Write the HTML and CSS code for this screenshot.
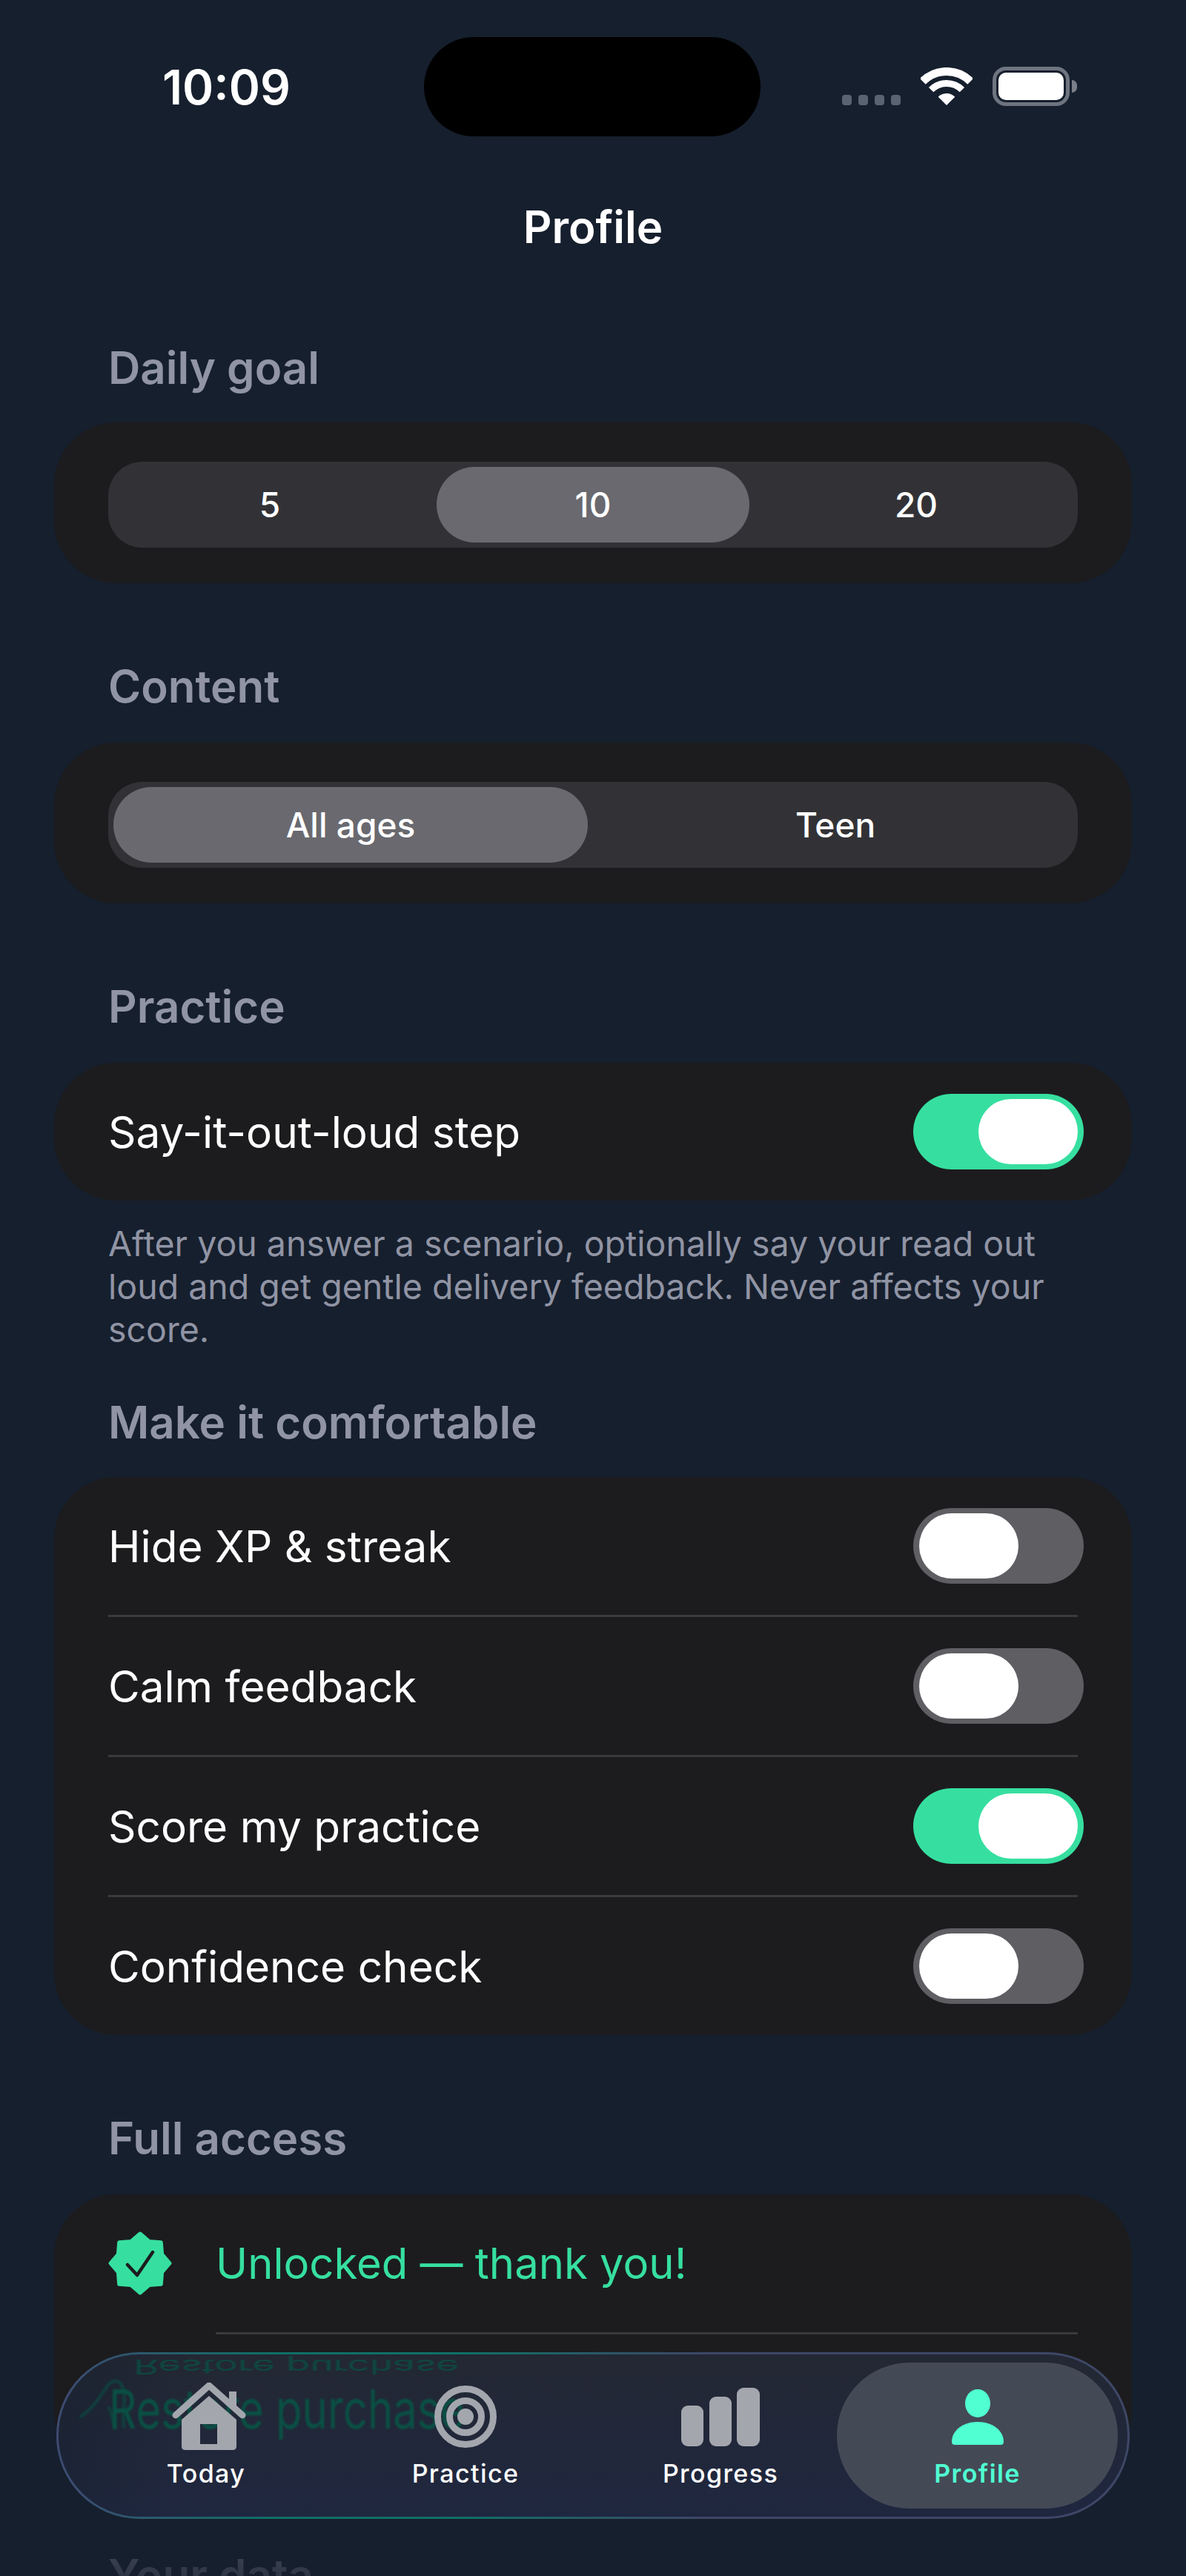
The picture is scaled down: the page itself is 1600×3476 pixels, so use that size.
FILE: index.html
```html
<!DOCTYPE html>
<html lang="en">
<head>
<meta charset="utf-8">
<title>Profile</title>
<link rel="stylesheet" href="styles.css">
</head>
<body>
<div class="status">
  <div class="time">10:09</div>
  <div class="island"></div>
  <div class="sys">
    <div class="dots"><i></i><i></i><i></i><i></i></div>
    <svg class="wifi" viewBox="0 0 70 52"><path d="M2.8 18.8A45.5 45.5 0 0 1 67.2 18.8" fill="none" stroke="#fff" stroke-width="11"/><path d="M14.1 30.1A29.5 29.5 0 0 1 55.9 30.1" fill="none" stroke="#fff" stroke-width="9"/><path d="M35 51L23.7 39.7A16 16 0 0 1 46.3 39.7Z" fill="#fff"/></svg>
    <div class="battery"><div class="cell"></div></div>
    <div class="nib"></div>
  </div>
</div>
<h1 class="title">Profile</h1>
<main class="main">
  <h2 class="head">Daily goal</h2>
  <section class="card seg-card">
    <div class="seg seg3"><span>5</span><span class="on">10</span><span>20</span></div>
  </section>
  <h2 class="head">Content</h2>
  <section class="card seg-card">
    <div class="seg seg2"><span class="on">All ages</span><span>Teen</span></div>
  </section>
  <h2 class="head">Practice</h2>
  <section class="card">
    <div class="row"><span>Say-it-out-loud step</span><div class="toggle active"><b></b></div></div>
  </section>
  <p class="note">After you answer a scenario, optionally say your read out loud and get gentle delivery feedback. Never affects your score.</p>
  <h2 class="head tight">Make it comfortable</h2>
  <section class="card">
    <div class="row"><span>Hide XP &amp; streak</span><div class="toggle"><b></b></div></div>
    <div class="rule"></div>
    <div class="row"><span>Calm feedback</span><div class="toggle"><b></b></div></div>
    <div class="rule"></div>
    <div class="row"><span>Score my practice</span><div class="toggle active"><b></b></div></div>
    <div class="rule"></div>
    <div class="row"><span>Confidence check</span><div class="toggle"><b></b></div></div>
  </section>
  <h2 class="head">Full access</h2>
  <section class="card">
    <div class="row access">
      <svg class="badge" viewBox="0 0 88 88"><polygon points="84,44 73.6,56.2 72.3,72.3 56.2,73.6 44,84 31.8,73.6 15.7,72.3 14.4,56.2 4,44 14.4,31.8 15.7,15.7 31.8,14.4 44,4 56.2,14.4 72.3,15.7 73.6,31.8" fill="#36DFA0" stroke="#36DFA0" stroke-width="5" stroke-linejoin="round"/><path d="M27 46L40 60L61 29" fill="none" stroke="#1C1C1E" stroke-width="4.5" stroke-linecap="round" stroke-linejoin="round"/></svg>
      <span class="green">Unlocked — thank you!</span>
    </div>
    <div class="rule short"></div>
    <div class="row access"><span class="green restore">Restore purchase</span></div>
  </section>
  <h2 class="head">Your data</h2>
</main>
<div class="fade"></div>
<nav class="nav">
  <div class="refract" aria-hidden="true">
    <svg class="swirl" viewBox="0 0 90 80"><path d="M4 62C22 50 30 34 42 18C52 10 60 14 62 30C64 46 60 58 62 76M42 50C48 60 46 68 50 78" fill="none" stroke="#0A5044" stroke-width="4" stroke-linecap="round"/></svg>
    <span class="mirror">Restore purchase</span>
    <span class="ghost">Restore purchase</span>
  </div>
  <a class="tab">
    <svg class="ico" viewBox="0 0 110 92"><path d="M86 12H96V32H86Z" fill="#A4A6AE"/><path fill-rule="evenodd" d="M59 18L96 50V86Q96 91 91 91H27Q22 91 22 86V50ZM47 56V83H70V56Z" fill="#A4A6AE"/><path d="M14 44L59 4L104 44" fill="none" stroke="#A4A6AE" stroke-width="9" stroke-linecap="round" stroke-linejoin="round"/></svg>
    <span>Today</span>
  </a>
  <a class="tab">
    <svg class="ico" viewBox="0 0 110 92"><circle cx="55" cy="46" r="37.5" fill="none" stroke="#A4A6AE" stroke-width="9"/><circle cx="55" cy="46" r="21.5" fill="none" stroke="#A4A6AE" stroke-width="9"/><circle cx="55" cy="46" r="11" fill="#A4A6AE"/></svg>
    <span>Practice</span>
  </a>
  <a class="tab third">
    <svg class="ico" viewBox="0 0 110 92"><rect x="2" y="31" width="30" height="55" rx="9" fill="#A4A6AE"/><rect x="40" y="19" width="30" height="67" rx="9" fill="#A4A6AE"/><rect x="77" y="7" width="31" height="79" rx="9" fill="#A4A6AE"/></svg>
    <span>Progress</span>
  </a>
  <a class="tab current">
    <svg class="ico" viewBox="0 0 110 92"><ellipse cx="55" cy="28" rx="17" ry="19" fill="#50FFD2"/><path d="M24 84A4 4 0 0 1 20 80C20 64 36 53 55 53C74 53 90 64 90 80A4 4 0 0 1 86 84Z" fill="#50FFD2"/></svg>
    <span>Profile</span>
  </a>
</nav>
</body>
</html>
```
FILE: styles.css
```css
* { box-sizing: border-box; }
html, body { margin: 0; height: 3476px; overflow: hidden; }
body {
  position: relative;
  background: #161F2D;
  color: #fff;
  font-family: Inter, "Liberation Sans", sans-serif;
}

.status {
  display: flex;
  height: 184px;
  padding-top: 50px;
}
.time {
  width: 572px;
  padding: 25px 0 0 219px;
  font-size: 64px;
  line-height: 86px;
  font-weight: 600;
}
.island { width: 454px; height: 134px; border-radius: 67px; background: #000; }
.sys { display: flex; align-items: flex-end; height: 93px; margin-left: 110px; }
.dots { display: flex; gap: 9px; margin-bottom: 1px; }
.dots i { width: 13px; height: 14px; border-radius: 4px; background: #5A6371; }
.wifi { width: 70px; height: 52px; margin-left: 27px; }
.battery {
  width: 104px;
  height: 53px;
  margin-left: 27px;
  padding: 3px;
  border: 5px solid #6E7480;
  border-radius: 18px;
}
.cell { height: 37px; background: #fff; border-radius: 10px; }
.nib { width: 7px; height: 17px; margin: 0 0 18px 3px; border-radius: 0 8px 8px 0; background: #7A7F8A; }

.title {
  margin: 84px 0 0;
  font-size: 60px;
  line-height: 76px;
  font-weight: 600;
  text-align: center;
}
.main { padding: 114px 73px 0; }
.head {
  margin: 101px 0 38px 73px;
  font-size: 60px;
  line-height: 76px;
  font-weight: 600;
  color: #9094A4;
}
.head:first-child { margin: 0 0 36px 73px; }
.head.tight { margin-top: 58px; margin-bottom: 36px; }

.card { background: #1C1C1E; border-radius: 84px; }
.seg-card { padding: 53px 73px 48px; }
.seg {
  display: grid;
  gap: 14px;
  height: 116px;
  padding: 7px;
  border-radius: 46px;
  background: #323236;
}
.seg3 { grid-template-columns: repeat(3, 1fr); }
.seg2 { grid-template-columns: repeat(2, 1fr); }
.seg span {
  display: flex;
  align-items: center;
  justify-content: center;
  font-size: 46px;
  font-weight: 500;
  border-radius: 51px;
}
.seg .on { background: #69696F; }

.row {
  display: flex;
  align-items: center;
  justify-content: space-between;
  height: 186px;
  padding: 0 65px 0 73px;
  font-size: 58.5px;
}
.rule { height: 3px; margin: 0 73px; background: #3A3A3D; }
.rule.short { margin-left: 218px; }
.toggle {
  display: flex;
  width: 230px;
  height: 102px;
  padding: 7px 8px;
  border-radius: 51px;
  background: #5E5E63;
}
.toggle b { width: 134px; height: 88px; border-radius: 44px; background: #fff; }
.toggle.active { justify-content: flex-end; background: #36DFA0; }

.note {
  margin: 29px 0 0;
  padding: 0 73px;
  font-size: 46.5px;
  line-height: 58px;
  color: #9094A4;
}

.access { justify-content: flex-start; gap: 58px; padding-left: 72px; font-size: 58px; }
.badge { width: 88px; height: 88px; flex: none; }
.green { color: #36DFA0; }
.restore { margin-left: 146px; }

.fade {
  position: absolute;
  left: 0; right: 0; bottom: 0;
  height: 80px;
  background: linear-gradient(180deg, rgba(22,31,45,.55), rgba(22,31,45,.8));
}

.nav {
  position: absolute;
  left: 76px;
  top: 3174px;
  width: 1448px;
  height: 225px;
  display: grid;
  grid-template-columns: 350px 350px 326px 379px;
  padding: 11px 0 11px 24px;
  border: 3px solid transparent;
  border-radius: 112px;
  background:
    linear-gradient(100deg, rgba(22,31,45,.55), rgba(22,31,45,0) 12%) padding-box,
    linear-gradient(180deg, #232833, #1F2740) padding-box,
    linear-gradient(90deg, #3E4A72 0%, #0F6F66 20%, #0F6F66 38%, #3D4766 60%) border-box;
  overflow: hidden;
}
.refract { position: absolute; inset: 0; color: #0A5044; }
.swirl { position: absolute; left: 26px; top: 22px; width: 90px; height: 80px; filter: blur(1.5px); opacity: .7; }
.mirror {
  position: absolute;
  left: 101px;
  top: 3px;
  font-size: 53px;
  line-height: 26px;
  white-space: nowrap;
  transform: scaleY(-.5);
  opacity: .8;
  filter: blur(1px);
}
.ghost {
  position: absolute;
  left: 68px;
  top: 36px;
  font-size: 58px;
  line-height: 76px;
  transform: scaleY(1.25);
  filter: blur(.8px);
  white-space: nowrap;
}
.tab {
  position: relative;
  display: flex;
  flex-direction: column;
  align-items: center;
  padding-top: 27px;
  gap: 11px;
  border-radius: 98px;
  font-size: 34px;
  line-height: 40px;
  font-weight: 500;
  letter-spacing: 1.4px;
}
.third { padding-left: 12px; }
.ico { width: 110px; height: 92px; display: block; }
.current { background: #444956; color: #50FFD2; font-weight: 600; }
```
